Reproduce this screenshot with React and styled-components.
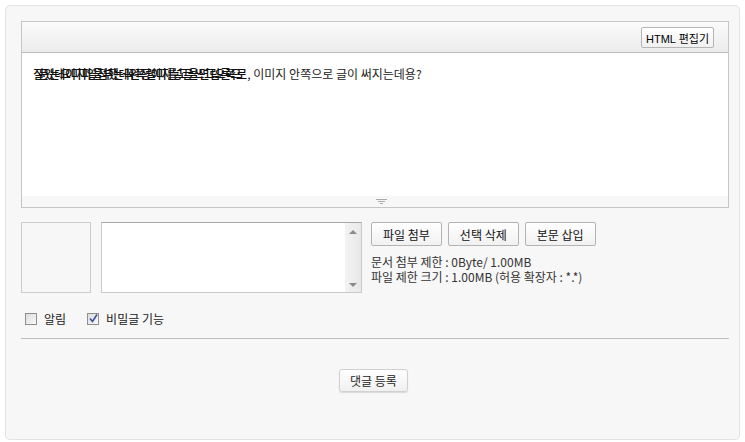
import styled, { createGlobalStyle } from "styled-components";

const Global = createGlobalStyle`
  html, body {
    margin: 0;
    padding: 0;
    background: #ffffff;
  }
  body {
    font-family: "Noto Sans CJK KR", "Noto Sans", sans-serif;
    font-size: 12px;
    color: #333;
  }
`;

export default function App() {
  return (
    <>
      <Global />
      <Page>
        <Panel>
          <Editor>
            <Toolbar>
              <SmallButton>HTML 편집기</SmallButton>
            </Toolbar>
            <EditArea>
              <Garbled>질문있는데요이미지파일을첨부했는데꼭왼쪽정렬이미지를넣고글을쓰면그림오른쪽으로</Garbled>
              <span>, 이미지 안쪽으로 글이 써지는데용?</span>
            </EditArea>
            <ResizeBar>
              <svg width="11" height="6" viewBox="0 0 11 6">
                <rect x="0" y="0" width="11" height="1" fill="#aaa" />
                <rect x="2" y="2" width="7" height="1" fill="#aaa" />
                <rect x="4" y="4" width="3" height="1" fill="#aaa" />
              </svg>
            </ResizeBar>
          </Editor>

          <AttachRow>
            <Preview />
            <FileList>
              <ScrollBar>
                <Arrow $up />
                <Arrow />
              </ScrollBar>
            </FileList>
            <AttachSide>
              <ButtonRow>
                <FileButton>파일 첨부</FileButton>
                <FileButton>선택 삭제</FileButton>
                <FileButton>본문 삽입</FileButton>
              </ButtonRow>
              <Info>
                <div>문서 첨부 제한 : 0Byte/ 1.00MB</div>
                <div>파일 제한 크기 : 1.00MB (허용 확장자 : *.*)</div>
              </Info>
            </AttachSide>
          </AttachRow>

          <OptionRow>
            <Option>
              <Check />
              알림
            </Option>
            <Option>
              <Check $checked>
                <svg width="9" height="9" viewBox="0 0 9 9">
                  <path d="M1 4.5 L3.5 7.5 L8 0.5" stroke="#3a4fa0" strokeWidth="1.6" fill="none" />
                </svg>
              </Check>
              비밀글 기능
            </Option>
          </OptionRow>

          <Divider />

          <SubmitRow>
            <SubmitButton>댓글 등록</SubmitButton>
          </SubmitRow>
        </Panel>
      </Page>
    </>
  );
}

const Page = styled.div`
  padding: 5px 5px 2px 5px;
  width: 745px;
  height: 442px;
  box-sizing: border-box;
`;

const Panel = styled.div`
  box-sizing: border-box;
  width: 735px;
  height: 435px;
  background: #f7f7f7;
  border: 1px solid #e3e3e3;
  border-radius: 5px;
  padding: 15px 10px 0 15px;
  display: flex;
  flex-direction: column;
`;

const Editor = styled.div`
  width: 708px;
  height: 187px;
  box-sizing: border-box;
  border: 1px solid #c6c6c6;
  display: flex;
  flex-direction: column;
  background: #fff;
`;

const Toolbar = styled.div`
  height: 31px;
  box-sizing: border-box;
  background: linear-gradient(#fbfbfb, #ececec);
  border-bottom: 1px solid #bdbdbd;
  display: flex;
  justify-content: flex-end;
  align-items: center;
  padding-right: 14px;
`;

const SmallButton = styled.button`
  font-family: "Liberation Sans", "Noto Sans CJK KR", sans-serif;
  font-size: 11px;
  color: #000;
  height: 21px;
  padding: 0 4px;
  background: linear-gradient(#ffffff, #f0f0f0);
  border: 1px solid #b5b5b5;
  border-radius: 2px;
  margin-top: 1px;
`;

const EditArea = styled.div`
  flex: 1;
  padding: 13px 11px 11px;
  font-size: 12px;
  line-height: 16px;
  color: #222;
  display: flex;
  align-items: flex-start;
  white-space: nowrap;
`;

const Garbled = styled.span`
  display: inline-block;
  letter-spacing: -5.7px;
  margin-right: 6px;
  color: #111;
  font-weight: 500;
`;

const ResizeBar = styled.div`
  height: 11px;
  background: #f7f7f7;
  display: flex;
  justify-content: center;
  align-items: center;
  padding-left: 12px;
`;

const AttachRow = styled.div`
  display: flex;
  margin-top: 14px;
  height: 71px;
`;

const Preview = styled.div`
  width: 70px;
  box-sizing: border-box;
  border: 1px solid #cccccc;
  background: #f7f7f7;
`;

const FileList = styled.div`
  width: 261px;
  margin-left: 10px;
  box-sizing: border-box;
  border: 1px solid #c9c9c9;
  border-top-color: #a8a8a8;
  background: #fff;
  display: flex;
  justify-content: flex-end;
`;

const ScrollBar = styled.div`
  width: 16px;
  background: linear-gradient(90deg, #f3f3f3, #e8e8e8);
  display: flex;
  flex-direction: column;
  justify-content: space-between;
  align-items: center;
  padding: 7px 0 5px;
`;

const Arrow = styled.div`
  width: 0;
  height: 0;
  border-left: 4px solid transparent;
  border-right: 4px solid transparent;
  ${(p) =>
    p.$up
      ? "border-bottom: 4px solid #8a8a8a;"
      : "border-top: 4px solid #8a8a8a;"}
`;

const AttachSide = styled.div`
  margin-left: 9px;
  display: flex;
  flex-direction: column;
`;

const ButtonRow = styled.div`
  display: flex;
  gap: 6px;
`;

const FileButton = styled.button`
  font-family: "Noto Sans CJK KR", sans-serif;
  font-size: 12px;
  color: #111;
  height: 24px;
  padding: 0 11px;
  background: linear-gradient(#ffffff, #f1f1f1);
  border: 1px solid #b3b3b3;
  border-radius: 2px;
`;

const Info = styled.div`
  margin-top: 8px;
  font-size: 12px;
  line-height: 15px;
  color: #333;
`;

const OptionRow = styled.div`
  display: flex;
  gap: 21px;
  margin-top: 17px;
  padding-left: 4px;
  align-items: center;
`;

const Option = styled.label`
  display: flex;
  align-items: center;
  gap: 7px;
  font-size: 12px;
  color: #222;
`;

const Check = styled.span`
  width: 12px;
  height: 12px;
  box-sizing: border-box;
  border: 1px solid #8f8f8f;
  background: linear-gradient(135deg, #dcdcdc, #fafafa);
  display: flex;
  align-items: center;
  justify-content: center;
`;

const Divider = styled.div`
  width: 708px;
  height: 1px;
  background: #bcbcbc;
  margin-top: 11px;
`;

const SubmitRow = styled.div`
  display: flex;
  justify-content: center;
  width: 708px;
  margin-top: 30px;
  padding-right: 3px;
  box-sizing: border-box;
`;

const SubmitButton = styled.button`
  font-family: "Noto Sans CJK KR", sans-serif;
  font-size: 12px;
  color: #222;
  height: 23px;
  padding: 0 10px;
  background: linear-gradient(#ffffff, #f0f0f0);
  border: 1px solid #d0d0d0;
  border-radius: 3px;
  box-shadow: 0 1px 1px rgba(0, 0, 0, 0.12);
`;
